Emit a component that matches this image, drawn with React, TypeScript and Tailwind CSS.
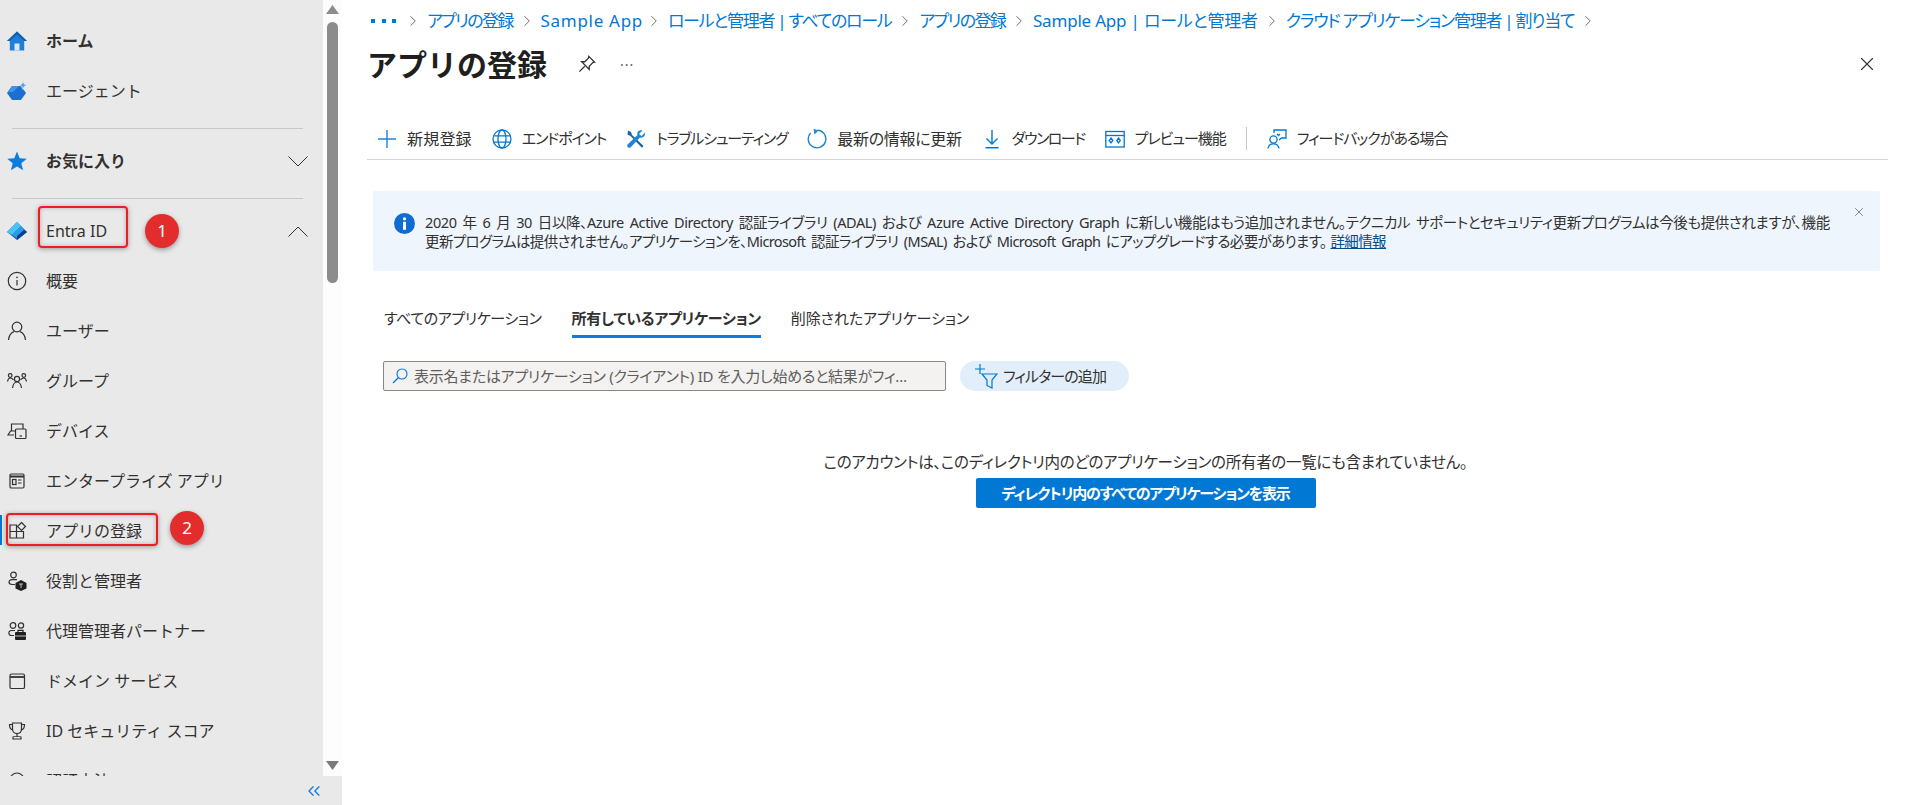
import type { ReactNode } from "react";
import { ChevronRight, ChevronsLeft, X } from "lucide-react";

const S = { fill: "none", stroke: "currentColor", strokeWidth: 1.2 };

function Ico({ children, w = 20, h = 20 }: { children: ReactNode; w?: number; h?: number }) {
  return (
    <svg width={w} height={h} viewBox="0 0 20 20" className="shrink-0">
      {children}
    </svg>
  );
}

const HomeIcon = () => (
  <Ico>
    <path d="M10 0.5 L0 10 H2.8 V19.5 H17.2 V10 H20 Z" fill="#1f7fd6" />
    <path d="M10 0.5 L0 10 H2.8 L10 3.5 L17.2 10 H20 Z" fill="#0f5fb0" />
    <rect x="7.5" y="12.5" width="5" height="7" fill="#dbe9f7" />
  </Ico>
);

const AgentIcon = () => (
  <Ico>
    <path d="M5 5 H14 L19 12 L14 19 H5 L0 12 Z" fill="#1c6fd0" />
    <path d="M5 5 H12 L6 11 H0.8 Z" fill="#3f94ea" />
    <path d="M16 0 L17.2 3 L20 4.2 L17.2 5.4 L16 8.4 L14.8 5.4 L12 4.2 L14.8 3 Z" fill="#4aa3ef" stroke="#e8e8e8" strokeWidth="0.8" />
  </Ico>
);

const StarIcon = () => (
  <Ico>
    <path d="M10 0.5 L12.7 7.2 L19.8 7.7 L14.3 12.2 L16.1 19.2 L10 15.4 L3.9 19.2 L5.7 12.2 L0.2 7.7 L7.3 7.2 Z" fill="#0f7ce0" />
  </Ico>
);

const EntraIcon = () => (
  <Ico>
    <path d="M10 1 L20 11 L10 19 L0 11 Z" fill="#1566b8" />
    <path d="M10 1 L0 11 L5 14 L14 5 Z" fill="#4cc3f5" />
    <path d="M14 5 L5 14 L10 17 L17 9 Z" fill="#2a9be8" />
    <path d="M10 19 L20 11 L17 9 L10 15 Z" fill="#103f85" />
  </Ico>
);

const InfoOutline = () => (
  <Ico>
    <g {...S}>
      <circle cx="10" cy="10" r="8.7" />
      <path d="M10 9 V14.5" />
    </g>
    <circle cx="10" cy="6.4" r="0.8" fill="currentColor" />
  </Ico>
);

const UserIcon = () => (
  <Ico>
    <g {...S}>
      <circle cx="10" cy="6" r="4.8" />
      <path d="M1.5 19 C2 14 5 11.3 7 10.6 M18.5 19 C18 14 15 11.3 13 10.6" />
    </g>
  </Ico>
);

const GroupIcon = () => (
  <Ico>
    <g {...S}>
      <circle cx="10" cy="8" r="2.6" />
      <path d="M5.5 17 C6 13.5 8 11 10 11 C12 11 14 13.5 14.5 17" />
      <circle cx="3.2" cy="4.5" r="1.8" />
      <circle cx="16.8" cy="4.5" r="1.8" />
      <path d="M0.5 10.5 C1 8 2 7 3.2 7 C4.4 7 5.5 7.6 6.5 9 M19.5 10.5 C19 8 18 7 16.8 7 C15.6 7 14.5 7.6 13.5 9" />
    </g>
  </Ico>
);

const DeviceIcon = () => (
  <Ico>
    <g {...S}>
      <path d="M4.5 10 V3 H16 V8" />
      <path d="M7 14 H1 L3.5 10 H9" />
      <rect x="8.5" y="8" width="10.5" height="9.5" rx="1" />
      <path d="M12.5 15 H15" />
    </g>
  </Ico>
);

const EnterpriseIcon = () => (
  <Ico>
    <g {...S}>
      <rect x="3" y="3" width="14" height="14" rx="1.2" />
      <path d="M3 5.5 H17" strokeWidth="2" />
      <rect x="5.5" y="8.5" width="3.5" height="5" />
      <path d="M11 9 H14.5 M11 12 H14.5" />
    </g>
  </Ico>
);

const AppRegIcon = () => (
  <Ico>
    <g {...S}>
      <path d="M3 4 H9.5 V17 H3 Z M9.5 10.5 H16.5 V17 H9.5 Z M3 10.5 H9.5" />
      <path d="M14.5 1.5 L18.5 5.5 L14.5 9.5 L10.5 5.5 Z" />
    </g>
  </Ico>
);

const RoleIcon = () => (
  <Ico>
    <g {...S}>
      <circle cx="6.5" cy="4" r="2.8" />
      <path d="M10 8.7 H5 C1 8.7 1 13.5 5 13.5 H8" />
    </g>
    <path d="M14 9 L19.5 12 V17.5 L14 20 L8.5 17.5 V12 Z" fill="#1f1f1f" />
    <path d="M12 13 H16 M14 13 V17" stroke="#e8e8e8" strokeWidth="0.8" />
  </Ico>
);

const PartnerIcon = () => (
  <Ico>
    <g {...S}>
      <circle cx="6" cy="4.5" r="2.8" />
      <circle cx="14" cy="4.5" r="2.6" />
      <path d="M8 9.5 H4.5 C1 9.5 1 14.5 4.5 14.5 H7" />
    </g>
    <rect x="8" y="11" width="11" height="8" rx="1" fill="#1f1f1f" />
    <path d="M11 11 V9.3 H16 V11" fill="none" stroke="#1f1f1f" strokeWidth="1.2" />
    <path d="M8 15 H19" stroke="#e8e8e8" strokeWidth="0.8" />
  </Ico>
);

const DomainIcon = () => (
  <Ico>
    <g {...S}>
      <rect x="3" y="3" width="14.5" height="14.5" rx="1.6" />
      <path d="M3 6 H17.5" strokeWidth="1.8" />
    </g>
  </Ico>
);

const TrophyIcon = () => (
  <Ico>
    <g {...S}>
      <path d="M5.5 2 H14.5 V8 C14.5 11 12.5 12.5 10 12.5 C7.5 12.5 5.5 11 5.5 8 Z" />
      <path d="M5.5 3.5 H2.5 C2.5 7 3.5 8.5 6 9 M14.5 3.5 H17.5 C17.5 7 16.5 8.5 14 9" />
      <path d="M10 12.5 V15.5 M6 18 V16 C6 15.5 14 15.5 14 16 V18 Z" />
    </g>
  </Ico>
);

const AuthIcon = () => (
  <Ico>
    <g {...S}>
      <circle cx="10" cy="9" r="7" />
    </g>
  </Ico>
);

const Chevron = ({ up }: { up?: boolean }) => (
  <svg width="20" height="11" viewBox="0 0 20 11" className="shrink-0">
    <path d={up ? "M0.5 10.5 L10 1 L19.5 10.5" : "M0.5 0.5 L10 10 L19.5 0.5"} fill="none" stroke="#323130" strokeWidth="1" />
  </svg>
);

const T = { stroke: "#0078d4", strokeWidth: 1.3, fill: "none" };

const PlusIcon = () => (
  <Ico>
    <path d="M10 1 V19 M1 10 H19" stroke="#1f84d8" strokeWidth="1.4" />
  </Ico>
);

const GlobeIcon = () => (
  <Ico>
    <g {...T}>
      <circle cx="10" cy="10" r="9" />
      <ellipse cx="10" cy="10" rx="4" ry="9" />
      <path d="M1.8 6.8 H18.2 M1.8 13.2 H18.2" />
    </g>
  </Ico>
);

const WrenchIcon = () => (
  <Ico>
    <path d="M2 1.5 L5 3 L6 6 L17.5 17 L16 18.8 L4.5 7 L1.5 5.5 Z" fill="#1d5f9f" />
    <path d="M19 3.5 L15.5 7 L13 5 L16.5 1.5 C13 0.5 10.5 3 11.5 6 L1.5 15.5 C0.5 18 2.5 19.5 4.5 18.5 L14 8.5 C17 9.5 19.5 7 19 3.5 Z" fill="#1f84d8" />
  </Ico>
);

const RefreshIcon = () => (
  <Ico>
    <path d="M10.5 1.2 A8.8 8.8 0 1 1 3.6 4" fill="none" stroke="#1f84d8" strokeWidth="1.4" />
    <path d="M6.5 -0.2 L11.5 1.6 L7.5 5.5 Z" fill="#1f84d8" />
  </Ico>
);

const DownloadIcon = () => (
  <Ico>
    <g {...T}>
      <path d="M10 1 V14.5 M4.5 9.5 L10 15 L15.5 9.5 M3.5 18.7 H16.5" strokeWidth="1.4" />
    </g>
  </Ico>
);

const PreviewIcon = () => (
  <Ico>
    <g {...T}>
      <rect x="0.8" y="2.5" width="18.4" height="15.5" />
      <path d="M0.8 6.5 H19.2" />
    </g>
    <path d="M6 9 L7.8 11.5 L6 14 L4.2 11.5 Z M13.5 9 L15.3 11.5 L13.5 14 L11.7 11.5 Z" {...T} />
  </Ico>
);

const FeedbackIcon = () => (
  <Ico>
    <g {...T}>
      <circle cx="6.5" cy="10.5" r="3.6" />
      <path d="M1 19.5 C1.5 16.5 3.5 14.8 6.5 14.8 C9.5 14.8 11.5 16.5 12 19.5" />
      <path d="M7 4 V1 H19 V9 H14.5 L12 11" />
      <path d="M13 5 L11.5 6.5 L10 5" />
    </g>
  </Ico>
);

const PinIcon = () => (
  <Ico w={18} h={18}>
    <path d="M12 1.5 L18.5 8 L16.5 8.5 L12.5 12.5 L12.5 16 L4 7.5 L7.5 7.5 L11.5 3.5 Z M7.5 12.5 L1.5 18.5" fill="none" stroke="#323130" strokeWidth="1.4" />
  </Ico>
);

const FunnelIcon = () => (
  <svg width="24" height="26" viewBox="0 0 24 26" className="shrink-0">
    <path d="M6 1 V11 M1 6 H11" stroke="#0078d4" strokeWidth="1.2" />
    <path d="M8 11 H23 L18 17 V25 L13 22.5 V17 Z" fill="none" stroke="#0078d4" strokeWidth="1.2" />
  </svg>
);

const SearchIcon = () => (
  <svg width="16" height="16" viewBox="0 0 16 16" className="shrink-0">
    <circle cx="10" cy="6" r="5" fill="none" stroke="#0078d4" strokeWidth="1.1" />
    <path d="M6.5 9.5 L1 15" stroke="#0078d4" strokeWidth="1.2" />
  </svg>
);

function Row({ icon, label, bold }: { icon: ReactNode; label: string; bold?: boolean }) {
  return (
    <div className="flex h-[50px] shrink-0 items-center pl-[7px] text-[#323130]">
      <span className="flex w-[39px] shrink-0 text-[#323130]">{icon}</span>
      <span className={bold ? "text-[16px] font-bold" : "text-[16px]"}>{label}</span>
    </div>
  );
}

function Sidebar() {
  return (
    <aside className="relative flex h-full w-[342px] shrink-0 flex-col bg-[#e9e9e9]">
      <div className="flex min-h-0 flex-1">
        <nav className="min-w-0 flex-1 overflow-hidden pt-[16px]">
          <Row icon={<HomeIcon />} label="ホーム" bold />
          <Row icon={<AgentIcon />} label="エージェント" />
          <div className="mt-[12px] mb-[7px] ml-[12px] w-[291px] border-t border-[#c8c8c8]" />
          <div className="flex items-center pr-[15px]">
            <div className="flex-1">
              <Row icon={<StarIcon />} label="お気に入り" bold />
            </div>
            <Chevron />
          </div>
          <div className="mt-[12px] mb-[7px] ml-[12px] w-[291px] border-t border-[#c8c8c8]" />
          <div className="flex items-center pr-[15px]">
            <div className="flex-1">
              <Row icon={<EntraIcon />} label="Entra ID" />
            </div>
            <Chevron up />
          </div>
          <Row icon={<InfoOutline />} label="概要" />
          <Row icon={<UserIcon />} label="ユーザー" />
          <Row icon={<GroupIcon />} label="グループ" />
          <Row icon={<DeviceIcon />} label="デバイス" />
          <Row icon={<EnterpriseIcon />} label="エンタープライズ アプリ" />
          <Row icon={<AppRegIcon />} label="アプリの登録" />
          <Row icon={<RoleIcon />} label="役割と管理者" />
          <Row icon={<PartnerIcon />} label="代理管理者パートナー" />
          <Row icon={<DomainIcon />} label="ドメイン サービス" />
          <Row icon={<TrophyIcon />} label="ID セキュリティ スコア" />
          <Row icon={<AuthIcon />} label="認証方法" />
        </nav>
        <div className="flex w-[19px] shrink-0 flex-col items-center bg-[#fdfdfd] pt-[5px] pb-[6px]">
          <svg width="13" height="9" viewBox="0 0 13 9">
            <path d="M6.5 0 L13 9 H0 Z" fill="#8c8c8c" />
          </svg>
          <div className="mt-[8px] h-[261px] w-[11px] rounded-full bg-[#8c8c8c]" />
          <svg width="13" height="9" viewBox="0 0 13 9" className="mt-auto">
            <path d="M6.5 9 L13 0 H0 Z" fill="#7a7a7a" />
          </svg>
        </div>
      </div>
      <div className="flex h-[29px] shrink-0 items-center justify-end pr-[18px] text-[#0f7ce0]">
        <ChevronsLeft size={20} strokeWidth={1.6} />
      </div>

      {/* annotations drawn on the screenshot */}
      <div className="absolute top-[206px] left-[38px] h-[42px] w-[90px] rounded-[4px] border-2 border-[#ee1c25] shadow-[0_1px_5px_rgba(0,0,0,0.35),inset_0_0_4px_rgba(0,0,0,0.25)]" />
      <div className="absolute top-[214px] left-[145px] flex h-[34px] w-[34px] items-center justify-center rounded-full bg-[#e32d2d] text-[17px] text-white shadow-[0_2px_5px_rgba(0,0,0,0.35)]">
        1
      </div>
      <div className="absolute top-[513px] left-[6px] h-[33px] w-[152px] rounded-[4px] border-2 border-[#ee1c25] shadow-[0_1px_5px_rgba(0,0,0,0.35),inset_0_0_4px_rgba(0,0,0,0.25)]" />
      <div className="absolute top-[511px] left-[170px] flex h-[34px] w-[34px] items-center justify-center rounded-full bg-[#e32d2d] text-[17px] text-white shadow-[0_2px_5px_rgba(0,0,0,0.35)]">
        2
      </div>
      <div className="absolute top-[515px] left-0 h-[30px] w-[2px] bg-[#0078d4]" />
    </aside>
  );
}

const crumbs = [
  { text: "アプリの登録", cls: "tracking-[-1.7px]" },
  { text: "Sample App", cls: "mr-[-3px] tracking-[0.7px]" },
  { text: "ロールと管理者 | すべてのロール", cls: "tracking-[-1.3px]" },
  { text: "アプリの登録", cls: "tracking-[-1.7px]" },
  { text: "Sample App | ロールと管理者", cls: "tracking-[-0.2px]" },
  { text: "クラウド アプリケーション管理者 | 割り当て", cls: "tracking-[-1.25px]" },
];

const tools = [
  { icon: <PlusIcon />, label: "新規登録", cls: "text-[16px] tracking-[0.2px]" },
  { icon: <GlobeIcon />, label: "エンドポイント", cls: "text-[15px] tracking-[-1.1px]" },
  { icon: <WrenchIcon />, label: "トラブルシューティング", cls: "text-[15px] tracking-[-1.2px]" },
  { icon: <RefreshIcon />, label: "最新の情報に更新", cls: "text-[16px] tracking-[-0.3px]" },
  { icon: <DownloadIcon />, label: "ダウンロード", cls: "text-[15px] tracking-[-1.5px]" },
  { icon: <PreviewIcon />, label: "プレビュー機能", cls: "text-[15px] tracking-[-1px]" },
];

export default function App() {
  return (
    <div className="flex h-[805px] w-[1911px] overflow-hidden bg-white font-['Noto_Sans','Noto_Sans_CJK_JP',sans-serif] text-[#323130]">
      <Sidebar />
      <main className="flex min-w-0 flex-1 flex-col pr-[23px] pl-[25px] [font-feature-settings:'palt']">
        {/* Breadcrumb */}
        <div className="flex h-[42px] shrink-0 items-center pl-[4px] text-[17px] whitespace-nowrap text-[#0078d4]">
          <span className="mr-[3px] flex w-[25px] justify-between">
            <i className="h-[4px] w-[4px] bg-[#0078d4]" />
            <i className="h-[4px] w-[4px] bg-[#0078d4]" />
            <i className="h-[4px] w-[4px] bg-[#0078d4]" />
          </span>
          {crumbs.map((c, i) => (
            <span key={i} className="flex items-center">
              <ChevronRight size={18} strokeWidth={1.2} className="mx-[5px] text-[#605e5c]" />
              <span className={c.cls}>{c.text}</span>
            </span>
          ))}
          <ChevronRight size={18} strokeWidth={1.2} className="mx-[5px] text-[#605e5c]" />
        </div>

        {/* Title */}
        <div className="flex h-[44px] shrink-0 items-center">
          <h1 className="text-[30px] font-bold text-[#201f1e] [font-feature-settings:normal]">アプリの登録</h1>
          <span className="ml-[31px]">
            <PinIcon />
          </span>
          <span className="ml-[24px] text-[14px] tracking-[1px] text-[#605e5c]">···</span>
          <X size={22} strokeWidth={1.2} className="mr-[10px] ml-auto text-[#323130]" />
        </div>

        {/* Toolbar */}
        <div className="mt-[32px] flex h-[42px] shrink-0 items-center border-b border-[#d5d5d5] pl-[10px]">
          {tools.map((t) => (
            <span key={t.label} className="mr-[20px] flex items-center gap-[10px] whitespace-nowrap">
              {t.icon}
              <span className={t.cls}>{t.label}</span>
            </span>
          ))}
          <span className="mr-[20px] h-[23px] w-px bg-[#c8c6c4]" />
          <span className="flex items-center gap-[10px] whitespace-nowrap">
            <FeedbackIcon />
            <span className="text-[15px] tracking-[-1px]">フィードバックがある場合</span>
          </span>
        </div>

        {/* Banner */}
        <div className="relative mt-[31px] mr-[8px] ml-[6px] flex h-[80px] shrink-0 rounded-[2px] bg-[#eef5fd] pt-[22px] pl-[21px]">
          <svg width="21" height="21" viewBox="0 0 21 21" className="shrink-0">
            <circle cx="10.5" cy="10.5" r="10.5" fill="#0f6cd0" />
            <circle cx="10.5" cy="5.8" r="1.6" fill="#fff" />
            <rect x="9" y="8.8" width="3" height="8" fill="#fff" />
          </svg>
          <p className="ml-[10px] text-[14.5px] leading-[19px] whitespace-nowrap [word-spacing:2.5px]">
            <span className="block tracking-[-0.4px]">
              2020 年 6 月 30 日以降、Azure Active Directory 認証ライブラリ (ADAL) および Azure Active Directory Graph に新しい機能はもう追加されません。テクニカル サポートとセキュリティ更新プログラムは今後も提供されますが、機能
            </span>
            <span className="block tracking-[-0.62px]">
              更新プログラムは提供されません。アプリケーションを、Microsoft 認証ライブラリ (MSAL) および Microsoft Graph にアップグレードする必要があります。
              <a className="ml-[4px] text-[#004e8c] underline">詳細情報</a>
            </span>
          </p>
          <X size={14} strokeWidth={1} className="absolute top-[14px] right-[14px] text-[#323130]" />
        </div>

        {/* Tabs */}
        <div className="mt-[33px] ml-[17px] flex shrink-0 gap-[30px] text-[15px] whitespace-nowrap">
          <span className="h-[34px] leading-[28px] tracking-[-0.4px]">すべてのアプリケーション</span>
          <span className="h-[34px] border-b-[3px] border-[#0f7ce0] leading-[28px] font-bold tracking-[-0.3px]">所有しているアプリケーション</span>
          <span className="h-[34px] leading-[28px] tracking-[-0.1px]">削除されたアプリケーション</span>
        </div>

        {/* Filter row */}
        <div className="mt-[23px] ml-[16px] flex shrink-0 items-center">
          <div className="flex h-[30px] w-[563px] items-center gap-[6px] rounded-[2px] border border-[#8a8886] bg-[#f3f2f1] pr-[31px] pl-[8px] text-[15px] tracking-[-0.25px] text-[#605e5c]">
            <SearchIcon />
            <span className="truncate">表示名またはアプリケーション (クライアント) ID を入力し始めると結果がフィルター処理されます</span>
          </div>
          <div className="ml-[14px] flex h-[30px] w-[169px] items-center gap-[5px] rounded-full bg-[#e2eef9] pl-[14px] text-[15px] tracking-[-0.9px]">
            <FunnelIcon />
            フィルターの追加
          </div>
        </div>

        {/* Empty state */}
        <div className="mt-[60px] flex flex-col items-center pl-[36px]">
          <p className="h-[27px] text-[15.5px] leading-[22px] tracking-[-0.3px]">このアカウントは、このディレクトリ内のどのアプリケーションの所有者の一覧にも含まれていません。</p>
          <button className="flex h-[30px] w-[340px] items-center justify-center rounded-[2px] bg-[#0078d4] text-[15px] font-bold tracking-[-1.2px] text-white">
            ディレクトリ内のすべてのアプリケーションを表示
          </button>
        </div>
      </main>
    </div>
  );
}
